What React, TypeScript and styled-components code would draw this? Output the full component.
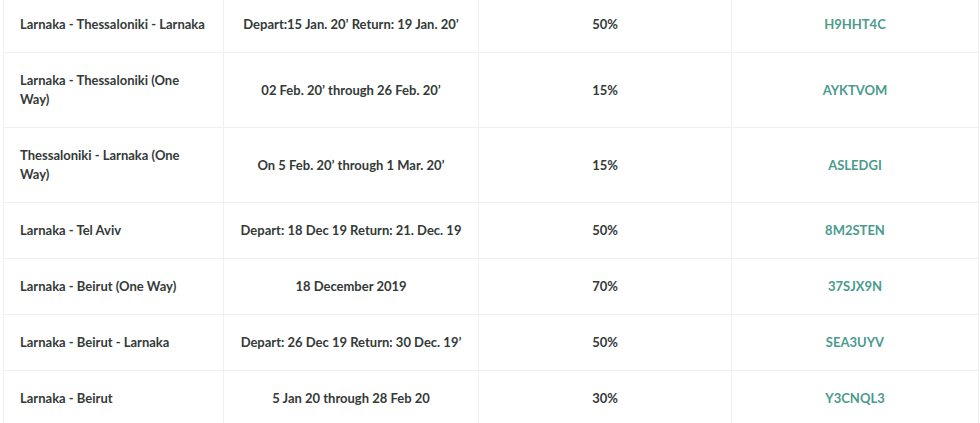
import React from "react";
import styled, { createGlobalStyle } from "styled-components";

const Global = createGlobalStyle`
  html, body { margin: 0; padding: 0; background: #fff; overflow: hidden; }
  body { font-family: "Lato", "Open Sans", sans-serif; }
`;

const Wrap = styled.div`
  padding: 0 1px 0 3px;
  margin-top: -4px;
`;

const Table = styled.table`
  width: 976px;
  border-collapse: collapse;
  table-layout: fixed;
  border: 1px solid #f0f0f0;
`;

const Cell = styled.td<{ $align?: "left" | "center"; $code?: boolean }>`
  border: 1px solid #f0f0f0;
  padding: ${(p) => (p.$align === "left" ? "18px 17px 18px 16px" : "18px 16px")};
  font-size: 13px;
  line-height: 19px;
  font-weight: 700;
  color: ${(p) => (p.$code ? "#4a9b8c" : "#333a38")};
  text-align: ${(p) => p.$align ?? "center"};
  vertical-align: middle;
`;

const rows = [
  ["Larnaka - Thessaloniki - Larnaka", "Depart:15 Jan. 20\u02BC Return: 19 Jan. 20\u02BC", "50%", "H9HHT4C"],
  ["Larnaka - Thessaloniki (One Way)", "02 Feb. 20\u02BC through 26 Feb. 20\u02BC", "15%", "AYKTVOM"],
  ["Thessaloniki - Larnaka (One Way)", "On 5 Feb. 20\u02BC through 1 Mar. 20\u02BC", "15%", "ASLEDGI"],
  ["Larnaka - Tel Aviv", "Depart: 18 Dec 19 Return: 21. Dec. 19", "50%", "8M2STEN"],
  ["Larnaka - Beirut (One Way)", "18 December 2019", "70%", "37SJX9N"],
  ["Larnaka - Beirut - Larnaka", "Depart: 26 Dec 19 Return: 30 Dec. 19\u02BC", "50%", "SEA3UYV"],
  ["Larnaka - Beirut", "5 Jan 20 through 28 Feb 20", "30%", "Y3CNQL3"],
];

export default function App() {
  return (
    <>
      <Global />
      <Wrap>
        <Table>
          <colgroup>
            <col style={{ width: 220 }} />
            <col style={{ width: 255 }} />
            <col style={{ width: 253 }} />
            <col />
          </colgroup>
          <tbody>
            {rows.map((r) => (
              <tr key={r[3]}>
                <Cell $align="left">{r[0]}</Cell>
                <Cell>{r[1]}</Cell>
                <Cell>{r[2]}</Cell>
                <Cell $code>{r[3]}</Cell>
              </tr>
            ))}
          </tbody>
        </Table>
      </Wrap>
    </>
  );
}
